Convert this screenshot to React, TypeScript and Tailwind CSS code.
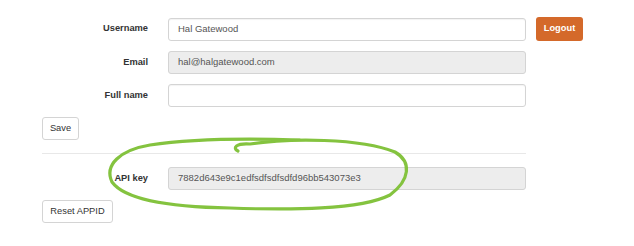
const font = { fontFamily: '"Liberation Sans", Arial, sans-serif' };

function Row({ label, children }: { label: string; children: React.ReactNode }) {
  return (
    <div className="flex items-center">
      <label className="w-[106px] text-right text-[9.3px] font-bold text-[#333]">{label}</label>
      <div className="ml-[20px] flex items-center">{children}</div>
    </div>
  );
}

function Field({ value, disabled }: { value?: string; disabled?: boolean }) {
  return (
    <div
      className={`flex h-[23px] w-[358px] items-center rounded-[3px] border border-[#d4d4d4] pl-[9px] text-[9.5px] text-[#555] ${
        disabled ? "bg-[#ededed]" : "bg-white shadow-[inset_0_1px_1px_rgba(0,0,0,0.05)]"
      }`}
    >
      {value}
    </div>
  );
}

function Btn({ children, w }: { children: React.ReactNode; w: string }) {
  return (
    <button
      className={`${w} flex h-[23px] items-center justify-center rounded-[3px] border border-[#d4d4d4] bg-white text-[9.3px] text-[#333]`}
    >
      {children}
    </button>
  );
}

export default function App() {
  return (
    <div className="relative h-[246px] w-[634px] overflow-hidden bg-white" style={font}>
      <div className="flex flex-col pl-[42px] pt-[17px]">
        <div className="flex flex-col gap-[10px]">
          <Row label="Username">
            <Field value="Hal Gatewood" />
            <button className="ml-[10px] flex h-[24px] w-[47px] items-center justify-center rounded-[3px] bg-[#d4692a] text-[9.3px] font-semibold text-white">
              Logout
            </button>
          </Row>
          <Row label="Email">
            <Field value="hal@halgatewood.com" disabled />
          </Row>
          <Row label="Full name">
            <Field />
          </Row>
        </div>
        <div className="mt-[10px]">
          <Btn w="w-[37px]">Save</Btn>
        </div>
        <div className="mt-[13px] w-[484px] border-t border-[#e8e8e8]" />
        <div className="mt-[13px]">
          <Row label="API key">
            <Field value="7882d643e9c1edfsdfsdfsdfd96bb543073e3" disabled />
          </Row>
        </div>
        <div className="mt-[10px]">
          <Btn w="w-[71px]">Reset APPID</Btn>
        </div>
      </div>

      <svg className="pointer-events-none absolute inset-0" width="634" height="246" viewBox="0 0 634 246">
        <path
          d="M 238 151 C 232 148, 236 143, 250 144 C 290 138, 360 138, 395 152 C 412 162, 410 180, 390 195 C 360 210, 290 210, 230 208 C 170 207, 125 200, 112 182 C 104 165, 120 150, 150 145 C 190 139, 240 138, 300 140"
          fill="none"
          stroke="#84c33f"
          strokeWidth="3.2"
          strokeLinecap="round"
          strokeLinejoin="round"
        />
      </svg>
    </div>
  );
}
